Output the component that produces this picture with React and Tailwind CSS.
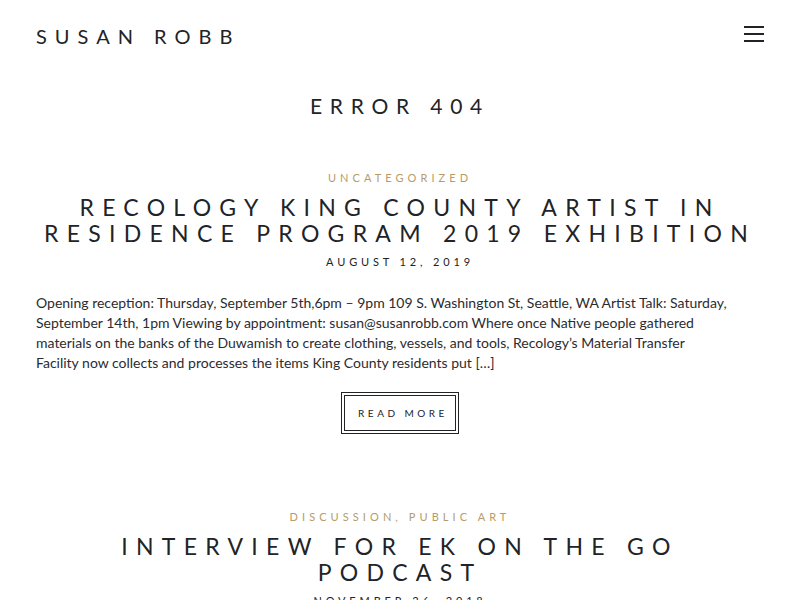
import React from "react";

const posts = [
  {
    cats: ["Uncategorized"],
    title: "Recology King County Artist in Residence Program 2019 Exhibition",
    date: "August 12, 2019",
    excerpt: [
      "Opening reception: Thursday, September 5th,6pm – 9pm 109 S. Washington St, Seattle, WA Artist Talk: Saturday,",
      "September 14th, 1pm Viewing by appointment: susan@susanrobb.com Where once Native people gathered",
      "materials on the banks of the Duwamish to create clothing, vessels, and tools, Recology’s Material Transfer",
      "Facility now collects and processes the items King County residents put […]",
    ],
  },
  {
    cats: ["Discussion", "Public Art"],
    title: "Interview for EK on the Go Podcast",
    date: "November 26, 2018",
    excerpt: null,
  },
];

export default function App() {
  return (
    <div className="min-h-screen bg-white text-[#222326] font-['Lato',sans-serif]">
      {/* Header */}
      <header className="flex items-start justify-between px-9 pt-[24px]">
        <a className="text-[20px] leading-[24px] tracking-[0.4em] uppercase">
          Susan Robb
        </a>
        <button className="flex flex-col gap-[5px] w-5 mt-[2px]">
          <span className="block h-[2px] w-5 bg-[#222326]" />
          <span className="block h-[2px] w-5 bg-[#222326]" />
          <span className="block h-[2px] w-5 bg-[#222326]" />
        </button>
      </header>

      <main className="px-9">
        <h1 className="text-center text-[21px] leading-[26px] tracking-[0.37em] uppercase mt-[45px]">
          Error 404
        </h1>

        {posts.map((p, i) => (
          <article key={i} className={i === 0 ? "mt-[52px]" : "mt-[76px]"}>
            <div className="text-center text-[11px] leading-[14px] tracking-[0.37em] uppercase text-[#b59c6a]">
              {p.cats.map((c, j) => (
                <span key={j}>
                  {j > 0 && <span>, </span>}
                  <span>{c}</span>
                </span>
              ))}
            </div>
            <h2 className="text-center text-[23px] leading-[26px] tracking-[0.36em] uppercase mt-[9px]">
              {p.title}
            </h2>
            <div className="text-center text-[11px] leading-[14px] tracking-[0.35em] uppercase mt-[9px]">
              {p.date}
            </div>
            {p.excerpt && (
              <>
                <p className="text-[14px] leading-[20px] text-[#2b2c30] mt-[24px]">
                  {p.excerpt.map((line, k) => (
                    <React.Fragment key={k}>
                      {line}
                      {k < p.excerpt.length - 1 && <br />}
                    </React.Fragment>
                  ))}
                </p>
                <div className="flex justify-center mt-[19px]">
                  <a className="border border-[#222326] p-[2px]">
                    <span className="block border border-[#222326] pl-[13px] pr-[7px] py-[11px] text-[10px] leading-[12px] tracking-[0.35em] uppercase">
                      Read More
                    </span>
                  </a>
                </div>
              </>
            )}
          </article>
        ))}
      </main>
    </div>
  );
}
